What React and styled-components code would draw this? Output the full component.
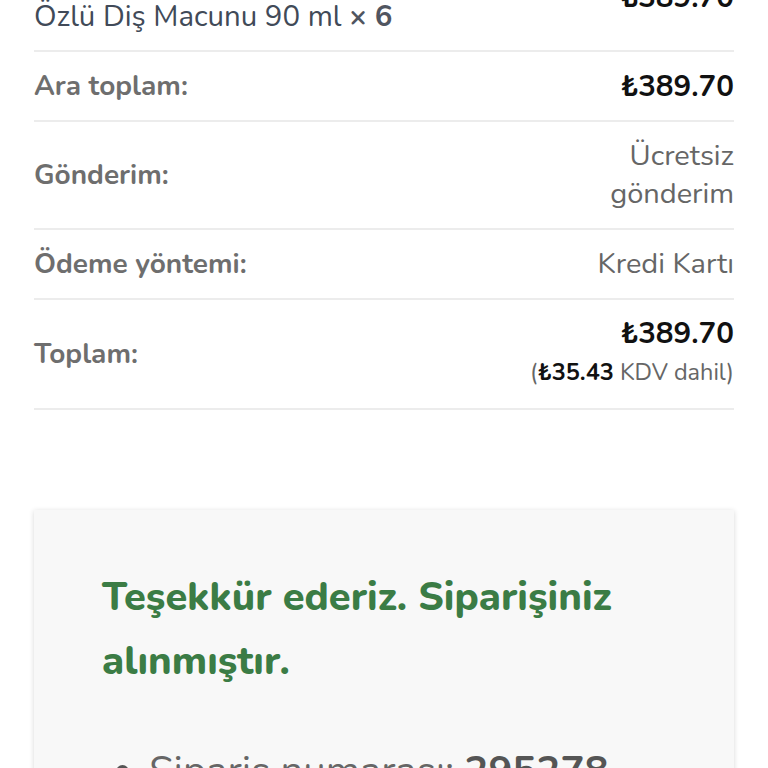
import React from "react";
import styled, { createGlobalStyle } from "styled-components";

const Global = createGlobalStyle`
  html, body { margin: 0; padding: 0; background: #fff; }
  body { font-family: "Nunito", "Lato", "Noto Sans", sans-serif; overflow: hidden; }
  * { box-sizing: border-box; }
`;

const Page = styled.div`
  width: 768px;
  padding: 0 34px;
  margin-top: -36px;
`;

const Table = styled.div`
  display: flex;
  flex-direction: column;
`;

const Row = styled.div`
  display: grid;
  grid-template-columns: 1fr 210px;
  align-items: ${(p) => (p.$top ? "start" : "center")};
  border-bottom: 2px solid #ececec;
  padding: 15px 0;
  line-height: 38px;
`;

const ProductName = styled.div`
  font-size: 29.4px;
  color: #414a58;
  padding-top: 18px;
  b { color: #505560; font-weight: 700; }
`;

const Label = styled.div`
  font-size: 28px;
  font-weight: 700;
  color: #6e6e6e;
`;

const Value = styled.div`
  text-align: right;
  font-size: 29px;
  color: #666;
  padding-left: 60px;
`;

const Price = styled.div`
  text-align: right;
  font-size: 29.5px;
  font-weight: 700;
  color: #111;
  line-height: 36px;
`;

const Tax = styled.div`
  text-align: right;
  font-size: 23.5px;
  color: #666;
  line-height: 42px;
  b { color: #111; font-weight: 700; }
`;

const Card = styled.section`
  margin-top: 100px;
  background: #f8f8f8;
  box-shadow: 0 1px 5px rgba(0, 0, 0, 0.16);
  padding: 55px 68px 40px;
`;

const Title = styled.h2`
  margin: 0;
  font-size: 39.8px;
  line-height: 64px;
  font-weight: 800;
  color: #3b7c45;
`;

const List = styled.ul`
  margin: 50px 0 0;
  padding-left: 47px;
  font-size: 40px;
  line-height: 56px;
  color: #666;
  li::marker { color: #555; }
  b { color: #555; font-weight: 700; }
`;

export default function App() {
  return (
    <>
      <Global />
      <Page>
        <Table>
          <Row $top>
            <ProductName>
              Özlü Diş Macunu 90 ml <b>× 6</b>
            </ProductName>
            <Price>₺389.70</Price>
          </Row>
          <Row>
            <Label>Ara toplam:</Label>
            <Price>₺389.70</Price>
          </Row>
          <Row>
            <Label>Gönderim:</Label>
            <Value>Ücretsiz gönderim</Value>
          </Row>
          <Row>
            <Label>Ödeme yöntemi:</Label>
            <Value>Kredi Kartı</Value>
          </Row>
          <Row>
            <Label>Toplam:</Label>
            <div>
              <Price>₺389.70</Price>
              <Tax>
                (<b>₺35.43</b> KDV dahil)
              </Tax>
            </div>
          </Row>
        </Table>
        <Card>
          <Title>Teşekkür ederiz. Siparişiniz alınmıştır.</Title>
          <List>
            <li>
              Sipariş numarası: <b>295278</b>
            </li>
          </List>
        </Card>
      </Page>
    </>
  );
}
